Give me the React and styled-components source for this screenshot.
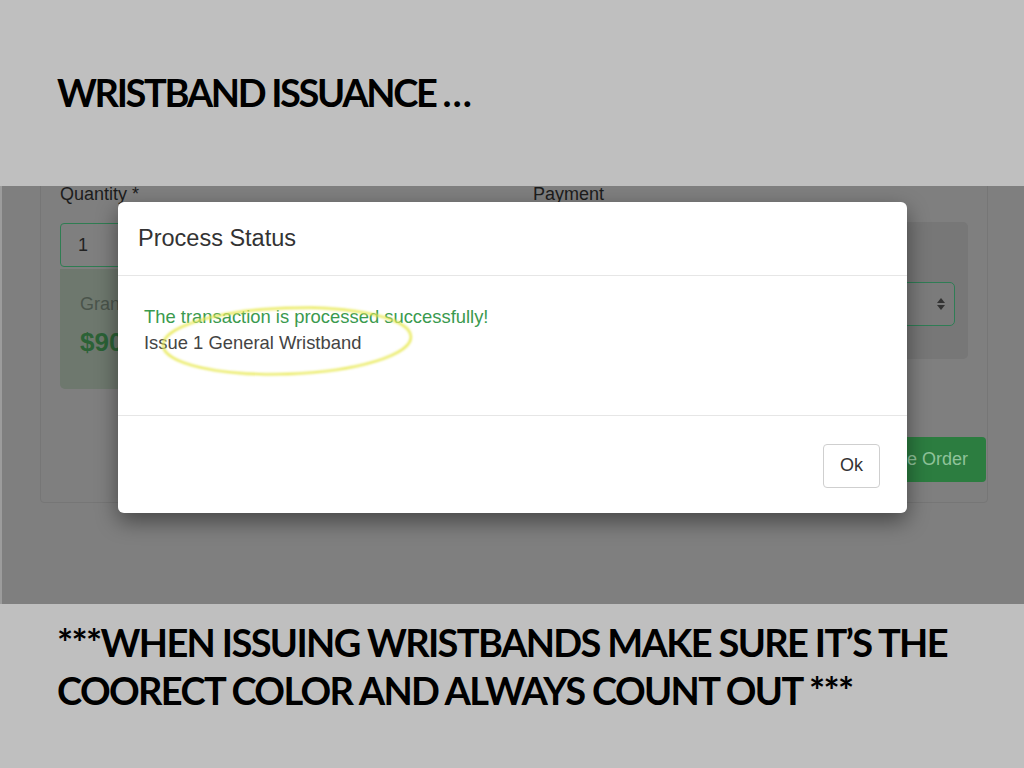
import React from "react";
import styled, { createGlobalStyle } from "styled-components";

const Global = createGlobalStyle`
  html, body { margin: 0; padding: 0; background: #bfbfbf; }
  * { box-sizing: border-box; }
`;

const Slide = styled.div`
  width: 1024px;
  height: 768px;
  background: #bfbfbf;
  display: flex;
  flex-direction: column;
  overflow: hidden;
`;

const TitleBar = styled.div`
  height: 186px;
  display: flex;
  align-items: center;
  padding-left: 57px;
  padding-bottom: 2px;
`;

const SlideText = styled.div`
  font-family: "Lato", "Open Sans", sans-serif;
  font-weight: 700;
  font-size: 38px;
  line-height: 48px;
  color: #000;
  white-space: nowrap;
  letter-spacing: ${(p) => (p.$tight ? "-2.35px" : "-1.65px")};
`;

const Shot = styled.div`
  position: relative;
  height: 418px;
  background: #7f7f7f;
  overflow: hidden;
  border-left: 2px solid #9c9c9c;
  font-family: "Liberation Sans", Arial, sans-serif;
`;

const Page = styled.div`
  padding: 0 36px 0 38px;
`;

const Card = styled.div`
  margin-top: -30px;
  height: 347px;
  border: 1px solid #767676;
  border-radius: 4px;
  padding: 29px 19px 0 19px;
`;

const Columns = styled.div`
  display: grid;
  grid-template-columns: 453px 435px;
  column-gap: 20px;
`;

const Col = styled.div`
  display: flex;
  flex-direction: column;
`;

const Label = styled.div`
  font-size: 18px;
  line-height: 20px;
  color: #1c1c1c;
  margin-top: -2px;
  margin-bottom: 19px;
`;

const Input = styled.div`
  height: 44px;
  border: 1.5px solid #2f7d52;
  border-radius: 4px;
  background: #7f7f7f;
  display: flex;
  align-items: center;
  padding-left: 17px;
  font-size: 18px;
  color: #222;
`;

const TotalBox = styled.div`
  margin-top: 2px;
  height: 120px;
  background: #6e786e;
  border-radius: 0 0 5px 5px;
  padding: 24px 20px 0;
`;

const TotalLabel = styled.div`
  font-size: 18px;
  color: #4a544b;
  line-height: 22px;
`;

const TotalValue = styled.div`
  margin-top: 12px;
  font-size: 26px;
  font-weight: 700;
  color: #2b6236;
`;

const PayBox = styled.div`
  margin-top: -1px;
  height: 137px;
  background: #777777;
  border-radius: 5px;
  padding: 24px 13px 0 20px;
`;

const SubLabel = styled.div`
  font-size: 16px;
  color: #444;
  line-height: 20px;
  margin-bottom: 16px;
`;

const Select = styled.div`
  height: 44px;
  border: 1.5px solid #2f7d55;
  border-radius: 5px;
  background: #7b7b7b;
  display: flex;
  align-items: center;
  justify-content: flex-end;
  padding-right: 8px;
`;

const Footer = styled.div`
  display: flex;
  justify-content: flex-end;
  margin-top: 48px;
  margin-right: -18px;
`;

const GreenButton = styled.div`
  height: 45px;
  padding: 0 18px;
  background: #2c7d40;
  border-radius: 4px;
  color: #8fc39a;
  font-size: 18px;
  display: flex;
  align-items: center;
`;

const Modal = styled.div`
  position: absolute;
  left: 116px;
  top: 16px;
  width: 789px;
  height: 311px;
  background: #fff;
  border-radius: 6px;
  box-shadow: 0 8px 22px rgba(0, 0, 0, 0.45);
  display: flex;
  flex-direction: column;
`;

const ModalHeader = styled.div`
  height: 74px;
  border-bottom: 1px solid #e6e6e6;
  display: flex;
  align-items: center;
  padding-left: 20px;
  font-size: 23.5px;
  color: #333;
`;

const ModalBody = styled.div`
  height: 140px;
  border-bottom: 1px solid #e6e6e6;
  padding: 28px 26px 0;
  font-size: 18.4px;
  line-height: 26px;
`;

const Line = styled.div`
  color: ${(p) => (p.$success ? "#3a9a4e" : "#444")};
`;

const ModalFooter = styled.div`
  flex: 1;
  display: flex;
  align-items: center;
  justify-content: flex-end;
  padding-right: 27px;
  padding-top: 2px;
`;

const OkButton = styled.button`
  width: 57px;
  height: 44px;
  border: 1px solid #cfcfcf;
  border-radius: 4px;
  background: #fff;
  font-family: "Liberation Sans", Arial, sans-serif;
  font-size: 18px;
  color: #333;
  padding: 0;
`;

const Highlight = styled.svg`
  position: absolute;
  left: 150px;
  top: 112px;
  overflow: visible;
`;

const Caption = styled.div`
  padding: 14px 57px 0;
`;

export default function App() {
  return (
    <>
      <Global />
      <Slide>
        <TitleBar>
          <SlideText $tight>WRISTBAND ISSUANCE …</SlideText>
        </TitleBar>
        <Shot>
          <Page>
            <Card>
              <Columns>
                <Col>
                  <Label>Quantity *</Label>
                  <Input>1</Input>
                  <TotalBox>
                    <TotalLabel>Grand Total</TotalLabel>
                    <TotalValue>$90.00</TotalValue>
                  </TotalBox>
                </Col>
                <Col>
                  <Label>Payment</Label>
                  <PayBox>
                    <SubLabel>Payment Method</SubLabel>
                    <Select>
                      <svg width="10" height="16" viewBox="0 0 10 16">
                        <path d="M5 2 L9 7 H1 Z" fill="#333" />
                        <path d="M5 14 L9 9 H1 Z" fill="#333" />
                      </svg>
                    </Select>
                  </PayBox>
                </Col>
              </Columns>
              <Footer>
                <GreenButton>Place Order</GreenButton>
              </Footer>
            </Card>
          </Page>
          <Modal>
            <ModalHeader>Process Status</ModalHeader>
            <ModalBody>
              <Line $success>The transaction is processed successfully!</Line>
              <Line>Issue 1 General Wristband</Line>
            </ModalBody>
            <ModalFooter>
              <OkButton>Ok</OkButton>
            </ModalFooter>
          </Modal>
          <Highlight width="280" height="90" viewBox="0 0 280 90">
            <defs>
              <filter id="glow" x="-10%" y="-20%" width="120%" height="140%">
                <feGaussianBlur stdDeviation="0.8" />
              </filter>
            </defs>
            <ellipse
              cx="135"
              cy="43"
              rx="124"
              ry="33"
              transform="rotate(-2 135 43)"
              fill="none"
              stroke="#e9ea5c"
              strokeWidth="2.4"
              filter="url(#glow)"
            />
          </Highlight>
        </Shot>
        <Caption>
          <SlideText>
            ***WHEN ISSUING WRISTBANDS MAKE SURE IT’S THE
            <br />
            COORECT COLOR AND ALWAYS COUNT OUT ***
          </SlideText>
        </Caption>
      </Slide>
    </>
  );
}
